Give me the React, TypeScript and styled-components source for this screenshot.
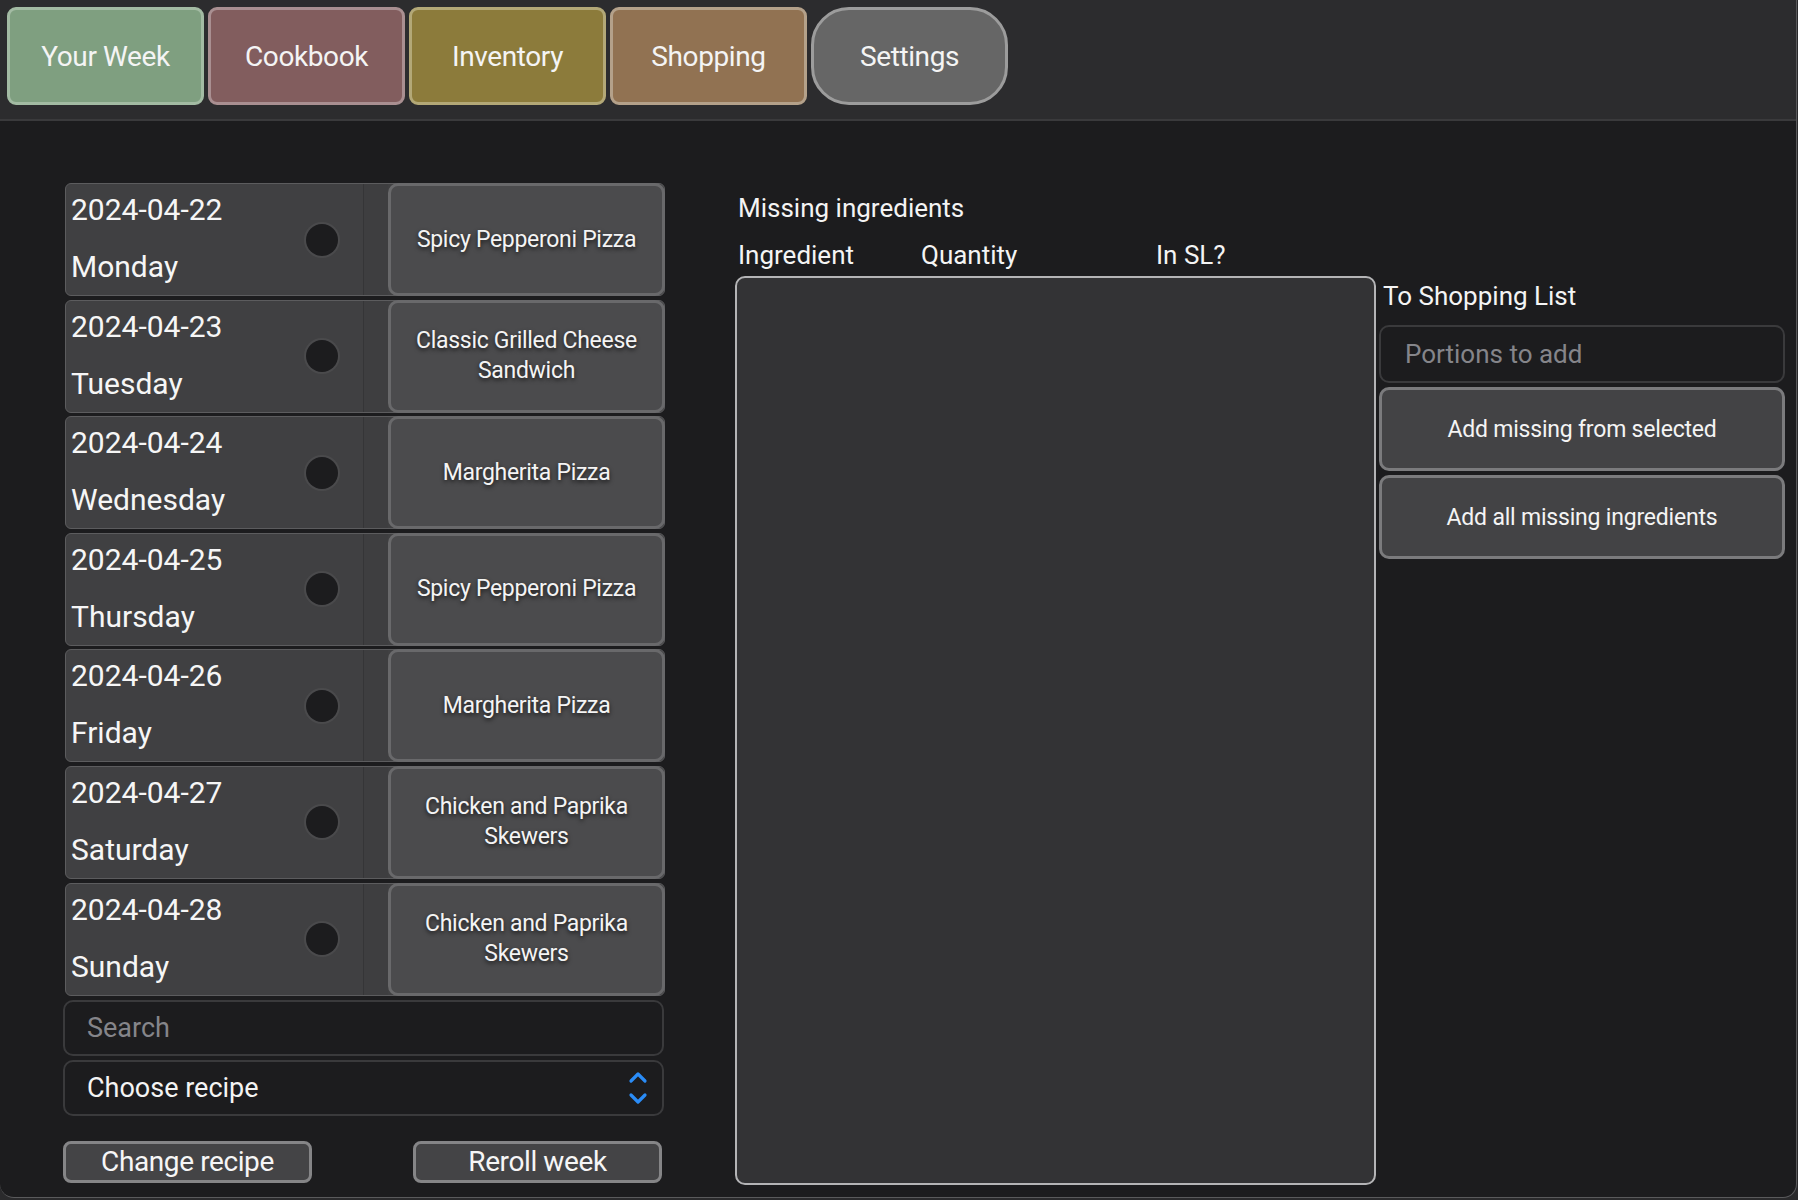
import React from "react";
import styled, { createGlobalStyle } from "styled-components";

const Global = createGlobalStyle`
  html, body { margin: 0; padding: 0; background: #2a2a2c; }
  body { font-family: Roboto, "Liberation Sans", sans-serif; color: #fff; }
  * { box-sizing: border-box; }
`;

const Window = styled.div`
  width: 1797px;
  height: 1198px;
  background: #1c1c1e;
  border-right: 1px solid #5a5a5c;
  border-bottom: 1px solid #5a5a5c;
  border-bottom-left-radius: 14px;
  border-bottom-right-radius: 14px;
  overflow: hidden;
  display: flex;
  flex-direction: column;
`;

const TopBar = styled.div`
  height: 121px;
  background: #2c2c2e;
  border-bottom: 2px solid #3a3a3c;
  display: flex;
  gap: 4px;
  padding: 7px 0 0 7px;
  flex-shrink: 0;
`;

const Tab = styled.div<{ $bg: string; $border: string; $pill?: boolean }>`
  width: 197px;
  height: 98px;
  background: ${(p) => p.$bg};
  border: 3px solid ${(p) => p.$border};
  border-radius: ${(p) => (p.$pill ? "38px" : "9px")};
  display: flex;
  align-items: center;
  justify-content: center;
  font-size: 28px;
  color: #f4f4f4;
  letter-spacing: -0.4px;
`;

const Main = styled.div`
  flex: 1;
  display: flex;
  padding: 62px 0 0 65px;
`;

const LeftCol = styled.div`
  width: 600px;
  display: flex;
  flex-direction: column;
`;

const Rows = styled.div`
  display: flex;
  flex-direction: column;
  gap: 3.6px;
`;

const Row = styled.div`
  height: 113px;
  display: flex;
  background: #404042;
  border: 1px solid #5c5c5e;
  border-radius: 6px;
`;

const DateSection = styled.div`
  width: 298px;
  display: flex;
  align-items: center;
  justify-content: space-between;
  padding: 0 25px 0 5px;
  border-right: 1px solid #353537;
`;

const DateTexts = styled.div`
  display: flex;
  flex-direction: column;
  justify-content: space-between;
  height: 100%;
  padding: 8px 0 10px;
  font-size: 30px;
  line-height: 36px;
  color: #f6f6f6;
`;

const Dot = styled.div`
  width: 32px;
  height: 32px;
  border-radius: 50%;
  background: #1c1c1e;
  box-shadow: 0 0 0 2px #4a4a4c;
`;

const Spacer = styled.div`
  width: 24px;
  background: #3e3e40;
`;

const RecipeButton = styled.div`
  flex: 1;
  margin: -1px -1px -1px 0;
  background: #4b4b4d;
  border: 3px solid #69696b;
  border-radius: 10px;
  display: flex;
  align-items: center;
  justify-content: center;
  text-align: center;
  padding: 0 14px;
  font-size: 23px;
  line-height: 30px;
  letter-spacing: -0.3px;
  color: #f4f4f4;
  text-shadow: 0 2px 4px rgba(0, 0, 0, 0.7);
`;

const Field = styled.div`
  height: 56px;
  margin-top: 4px;
  margin-left: -2px;
  width: 601px;
  border: 2px solid #3a3a3c;
  border-radius: 10px;
  background: #1c1c1e;
  display: flex;
  align-items: center;
  justify-content: space-between;
  padding: 0 14px 0 22px;
  font-size: 27px;
`;

const Placeholder = styled.span`
  color: #85858a;
`;

const Value = styled.span`
  color: #f4f4f4;
`;

const BottomButtons = styled.div`
  display: flex;
  justify-content: space-between;
  margin: 25px 3px 0 -2px;
`;

const SmallButton = styled.div`
  width: 249px;
  height: 42px;
  background: #444446;
  border: 3px solid #858587;
  border-radius: 8px;
  display: flex;
  align-items: center;
  justify-content: center;
  font-size: 28px;
  color: #f6f6f6;
  letter-spacing: -0.4px;
`;

const MidCol = styled.div`
  width: 641px;
  margin-left: 70px;
  display: flex;
  flex-direction: column;
`;

const Title = styled.div`
  font-size: 26px;
  line-height: 32px;
  padding-left: 3px;
  margin-top: 9px;
  color: #f4f4f4;
`;

const HeaderRow = styled.div`
  display: flex;
  font-size: 26px;
  line-height: 32px;
  padding-left: 3px;
  margin-top: 15px;
  color: #f4f4f4;
`;

const HeaderCell = styled.div<{ $w: number }>`
  width: ${(p) => p.$w}px;
`;

const TableBox = styled.div`
  margin-top: 5px;
  height: 909px;
  background: #333335;
  border: 2px solid #b4b4b6;
  border-radius: 10px;
`;

const RightCol = styled.div`
  width: 406px;
  margin-left: 3px;
  padding-top: 97px;
  display: flex;
  flex-direction: column;
`;

const SubTitle = styled.div`
  font-size: 26px;
  line-height: 32px;
  padding-left: 4px;
  color: #f4f4f4;
`;

const PortionField = styled.div`
  margin-top: 13px;
  height: 58px;
  border: 2px solid #3a3a3c;
  border-radius: 10px;
  background: #1c1c1e;
  display: flex;
  align-items: center;
  padding-left: 24px;
  font-size: 26px;
`;

const BigButton = styled.div`
  margin-top: 4px;
  height: 84px;
  background: #434345;
  border: 3px solid #7b7b7d;
  border-radius: 10px;
  display: flex;
  align-items: center;
  justify-content: center;
  font-size: 23px;
  color: #f4f4f4;
  letter-spacing: -0.2px;
`;

const Chevrons = () => (
  <svg width="20" height="38" viewBox="0 0 20 38" fill="none">
    <path d="M3 12 L10 5 L17 12" stroke="#2a8cf7" strokeWidth="3.2" strokeLinecap="round" strokeLinejoin="round" />
    <path d="M3 26 L10 33 L17 26" stroke="#2a8cf7" strokeWidth="3.2" strokeLinecap="round" strokeLinejoin="round" />
  </svg>
);

const week = [
  { date: "2024-04-22", day: "Monday", recipe: "Spicy Pepperoni Pizza" },
  { date: "2024-04-23", day: "Tuesday", recipe: "Classic Grilled Cheese Sandwich" },
  { date: "2024-04-24", day: "Wednesday", recipe: "Margherita Pizza" },
  { date: "2024-04-25", day: "Thursday", recipe: "Spicy Pepperoni Pizza" },
  { date: "2024-04-26", day: "Friday", recipe: "Margherita Pizza" },
  { date: "2024-04-27", day: "Saturday", recipe: "Chicken and Paprika Skewers" },
  { date: "2024-04-28", day: "Sunday", recipe: "Chicken and Paprika Skewers" },
];

const tabs = [
  { label: "Your Week", bg: "#7f9f80", border: "#a3bba3" },
  { label: "Cookbook", bg: "#825d5e", border: "#a98f91" },
  { label: "Inventory", bg: "#8c7b3b", border: "#b3a877" },
  { label: "Shopping", bg: "#917252", border: "#b4a18a" },
  { label: "Settings", bg: "#666666", border: "#9c9c9c", pill: true },
];

export default function App() {
  return (
    <>
      <Global />
      <Window>
        <TopBar>
          {tabs.map((t) => (
            <Tab key={t.label} $bg={t.bg} $border={t.border} $pill={t.pill}>
              {t.label}
            </Tab>
          ))}
        </TopBar>
        <Main>
          <LeftCol>
            <Rows>
              {week.map((d) => (
                <Row key={d.date}>
                  <DateSection>
                    <DateTexts>
                      <span>{d.date}</span>
                      <span>{d.day}</span>
                    </DateTexts>
                    <Dot />
                  </DateSection>
                  <Spacer />
                  <RecipeButton>{d.recipe}</RecipeButton>
                </Row>
              ))}
            </Rows>
            <Field>
              <Placeholder>Search</Placeholder>
            </Field>
            <Field>
              <Value>Choose recipe</Value>
              <Chevrons />
            </Field>
            <BottomButtons>
              <SmallButton>Change recipe</SmallButton>
              <SmallButton>Reroll week</SmallButton>
            </BottomButtons>
          </LeftCol>
          <MidCol>
            <Title>Missing ingredients</Title>
            <HeaderRow>
              <HeaderCell $w={183}>Ingredient</HeaderCell>
              <HeaderCell $w={235}>Quantity</HeaderCell>
              <HeaderCell $w={100}>In SL?</HeaderCell>
            </HeaderRow>
            <TableBox />
          </MidCol>
          <RightCol>
            <SubTitle>To Shopping List</SubTitle>
            <PortionField>
              <Placeholder>Portions to add</Placeholder>
            </PortionField>
            <BigButton>Add missing from selected</BigButton>
            <BigButton>Add all missing ingredients</BigButton>
          </RightCol>
        </Main>
      </Window>
    </>
  );
}
